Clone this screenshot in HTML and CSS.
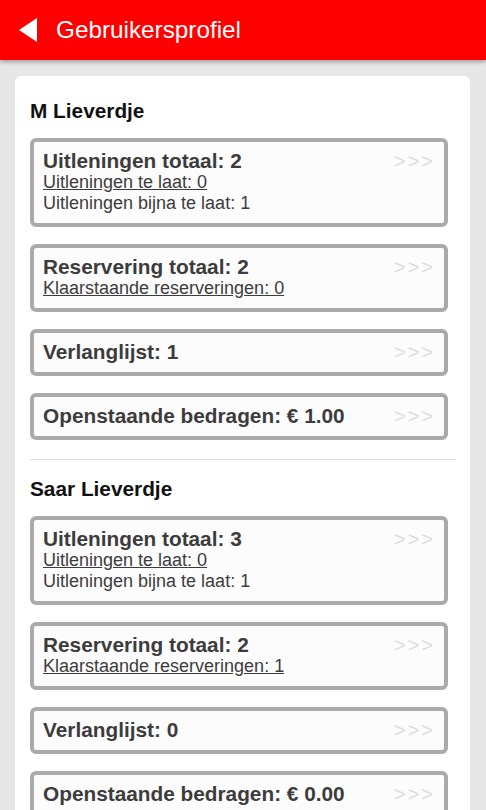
FILE: index.html
```html
<!DOCTYPE html>
<html>
<head>
    <title>Gebruikersprofiel</title>
    <link rel="stylesheet" href="styles.css">
</head>
<body>
    <header class="topbar">
        <a class="back" href="#">
            <svg width="18" height="24" viewBox="0 0 18 24"><polygon points="0,12 18,0 18,24" fill="#fff"/></svg>
        </a>
        <h1>Gebruikersprofiel</h1>
    </header>

    <main class="page">
        <div class="panel">
            <section class="member">
                <h2>M Lieverdje</h2>
                <a class="tile" href="#">
                    <div class="tile-body">
                        <div class="tile-title">Uitleningen totaal: 2</div>
                        <div class="tile-line link">Uitleningen te laat: 0</div>
                        <div class="tile-line">Uitleningen bijna te laat: 1</div>
                    </div>
                    <span class="more">&gt;&gt;&gt;</span>
                </a>
                <a class="tile" href="#">
                    <div class="tile-body">
                        <div class="tile-title">Reservering totaal: 2</div>
                        <div class="tile-line link">Klaarstaande reserveringen: 0</div>
                    </div>
                    <span class="more">&gt;&gt;&gt;</span>
                </a>
                <a class="tile" href="#">
                    <div class="tile-body">
                        <div class="tile-title">Verlanglijst: 1</div>
                    </div>
                    <span class="more">&gt;&gt;&gt;</span>
                </a>
                <a class="tile" href="#">
                    <div class="tile-body">
                        <div class="tile-title">Openstaande bedragen: € 1.00</div>
                    </div>
                    <span class="more">&gt;&gt;&gt;</span>
                </a>
            </section>

            <hr class="divider">

            <section class="member">
                <h2>Saar Lieverdje</h2>
                <a class="tile" href="#">
                    <div class="tile-body">
                        <div class="tile-title">Uitleningen totaal: 3</div>
                        <div class="tile-line link">Uitleningen te laat: 0</div>
                        <div class="tile-line">Uitleningen bijna te laat: 1</div>
                    </div>
                    <span class="more">&gt;&gt;&gt;</span>
                </a>
                <a class="tile" href="#">
                    <div class="tile-body">
                        <div class="tile-title">Reservering totaal: 2</div>
                        <div class="tile-line link">Klaarstaande reserveringen: 1</div>
                    </div>
                    <span class="more">&gt;&gt;&gt;</span>
                </a>
                <a class="tile" href="#">
                    <div class="tile-body">
                        <div class="tile-title">Verlanglijst: 0</div>
                    </div>
                    <span class="more">&gt;&gt;&gt;</span>
                </a>
                <a class="tile" href="#">
                    <div class="tile-body">
                        <div class="tile-title">Openstaande bedragen: € 0.00</div>
                    </div>
                    <span class="more">&gt;&gt;&gt;</span>
                </a>
            </section>
        </div>
    </main>
</body>
</html>
```

FILE: styles.css
```css
body {
    margin: 0;
    font-family: "Liberation Sans", Arial, sans-serif;
    background-color: #e6e6e6;
}

.topbar {
    display: flex;
    align-items: center;
    height: 60px;
    padding-left: 19px;
    background-color: #ff0000;
    box-shadow: 0 2px 4px rgba(0, 0, 0, 0.3);
}

.back {
    display: flex;
    margin-right: 19px;
}

.topbar h1 {
    margin: 0;
    font-size: 24.3px;
    font-weight: normal;
    color: #fff;
}

.page {
    padding: 16px 16px 0 15px;
}

.panel {
    background-color: #fff;
    border-radius: 6px;
    padding: 23px 14px 0 15px;
}

.member h2 {
    margin: 0 0 16px;
    font-size: 20.8px;
    line-height: 23px;
    color: #111;
}

.tile {
    display: flex;
    align-items: flex-start;
    margin: 0 8px 17px 0;
    padding: 7px 9px 9px;
    border: 4px solid #aaa;
    border-radius: 6px;
    background-color: #fcfcfc;
    color: #3c3c3c;
    text-decoration: none;
}

.tile-body {
    flex: 1;
}

.tile-title {
    font-size: 20.8px; /* 1.3em */
    font-weight: bold;
    line-height: 23px;
}

.tile-line {
    font-size: 18px;
    line-height: 21px;
}

.tile-line.link {
    text-decoration: underline;
}

.more {
    margin-top: 1px;
    font-size: 20px;
    line-height: 22px;
    letter-spacing: 2px;
    color: #ddd;
}

.divider {
    margin: 19px 0 17px;
    border: none;
    border-top: 1px solid #ddd;
}
```
